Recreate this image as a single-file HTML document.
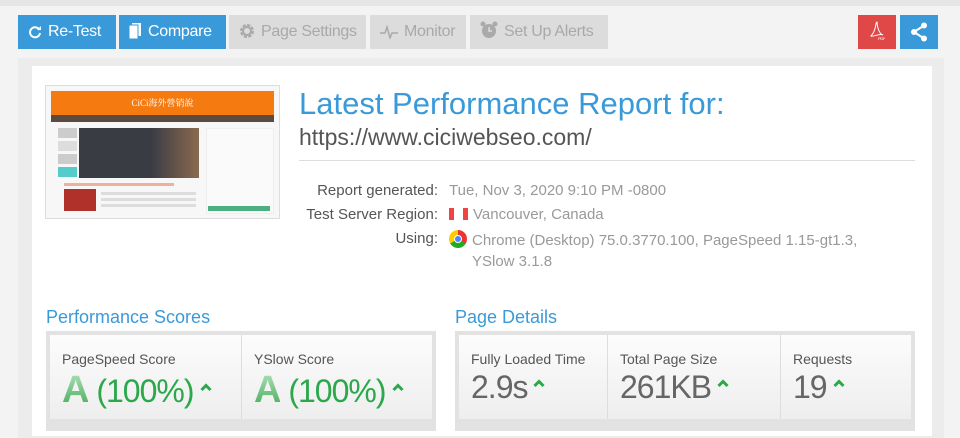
<!DOCTYPE html>
<html><head><style>
*{box-sizing:border-box;margin:0;padding:0}
body{width:960px;height:423px;overflow:hidden;background:#f3f3f3;font-family:"Liberation Sans",sans-serif;position:relative}
.top{position:absolute;left:0;top:0;width:960px;height:6px;background:#e6e6e6}
.btn{position:absolute;top:15px;height:34px;font-size:16px;line-height:34px;color:#fff;background:#3a9ad9;padding-left:10px;letter-spacing:-0.3px}
.btn.g{background:#dcdcdc;color:#a9a9a9}
.btn svg{vertical-align:-3px;margin-right:6px}
.outer{position:absolute;left:18px;top:58px;width:926px;height:380px;background:#ececec}
.panel{position:absolute;left:32px;top:66px;width:900px;height:370px;background:#fff}
.a{position:absolute;white-space:nowrap}
.thumb{left:45px;top:85px;width:235px;height:134px;border:1px solid #ddd;background:#f7f7f7;padding:5px;overflow:hidden}
.lbl{color:#555;font-size:15px;text-align:right;width:140px}
.val{color:#999;font-size:15px}
.sec{color:#3a9ad9;font-size:18px}
.box{position:absolute;background:#e2e2e2;padding:4px}
.cell{position:absolute;top:4px;height:84px;background:linear-gradient(#fcfcfc,#eeeeee);border-right:1px solid #ddd}
.cell .t{position:absolute;left:12px;top:16px;font-size:14px;color:#555}
.cell .v{position:absolute;left:12px;top:34px;font-size:32px;color:#666;white-space:nowrap;letter-spacing:-1px}
.cell .v.gr{color:#2aa84a}
.up{display:inline-block;width:12px;height:10px;vertical-align:10px;margin-left:6px}
.A{font-weight:bold;font-size:38px;background:linear-gradient(#b8e4bf,#3da852);-webkit-background-clip:text;color:transparent}
.ln{position:absolute;height:3px;background:#ddd}
</style></head><body>
<div class="top"></div>
<div class="btn" style="left:18px;width:98px"><svg width="14" height="14" viewBox="0 0 14 14"><path d="M11.5 5A5 5 0 1 0 12 8" fill="none" stroke="#fff" stroke-width="2"/><path d="M9 5h4V1z" fill="#fff"/></svg>Re-Test</div>
<div class="btn" style="left:119px;width:107px"><svg width="13" height="16" viewBox="0 0 13 16"><rect x="3" y="0" width="9" height="13" fill="#fff"/><rect x="0" y="2" width="9" height="14" fill="#fff" stroke="#3a9ad9"/></svg>Compare</div>
<div class="btn g" style="left:229px;width:137px"><svg width="16" height="16" viewBox="0 0 16 16"><circle cx="8" cy="8" r="5.5" fill="none" stroke="#aaa" stroke-width="3" stroke-dasharray="3 1.3"/><circle cx="8" cy="8" r="4" fill="none" stroke="#aaa" stroke-width="2"/></svg>Page Settings</div>
<div class="btn g" style="left:370px;width:96px"><svg width="18" height="14" viewBox="0 0 18 14"><path d="M0 8h5l2-6 3 11 2-5h6" fill="none" stroke="#aaa" stroke-width="1.5"/></svg>Monitor</div>
<div class="btn g" style="left:470px;width:138px"><svg width="18" height="18" viewBox="0 0 18 18"><circle cx="9" cy="10" r="7" fill="#aaa"/><circle cx="3" cy="3" r="2.5" fill="#aaa"/><circle cx="15" cy="3" r="2.5" fill="#aaa"/><path d="M9 6v4h3" stroke="#ddd" stroke-width="1.5" fill="none"/></svg>Set Up Alerts</div>
<div class="btn" style="left:858px;width:38px;background:#e04848;padding:0;text-align:center"><svg width="16" height="20" viewBox="0 0 16 20" style="margin:6px 0 0"><path d="M8 1c-2 0 0 8-6 14 3 1 9-3 12-1-4-1-6-9-6-13z" fill="none" stroke="#fff" stroke-width="1"/><text x="9" y="19" font-size="4" fill="#fff" font-family="Liberation Sans">PDF</text></svg></div>
<div class="btn" style="left:900px;width:38px;padding:0;text-align:center"><svg width="18" height="20" viewBox="0 0 18 20" style="margin:7px 0 0"><circle cx="14" cy="3.5" r="3" fill="#fff"/><circle cx="4" cy="10" r="3" fill="#fff"/><circle cx="14" cy="16.5" r="3" fill="#fff"/><path d="M14 3.5L4 10l10 6.5" stroke="#fff" stroke-width="2" fill="none"/></svg></div>
<div class="outer"></div>
<div class="panel"></div>
<div class="a thumb">
<div style="height:24px;background:#f57a10;color:#fff;font-size:9px;text-align:center;line-height:24px;font-family:'Liberation Serif','Noto Serif CJK SC',serif">CiCi海外營销說</div>
<div style="height:7px;background:#5a4a40"></div>
<div style="position:absolute;left:12px;top:42px;width:19px;height:10px;background:#ccc"></div>
<div style="position:absolute;left:12px;top:55px;width:19px;height:10px;background:#ddd"></div>
<div style="position:absolute;left:12px;top:68px;width:19px;height:10px;background:#ccc"></div>
<div style="position:absolute;left:12px;top:81px;width:19px;height:10px;background:#5cc"></div>
<div style="position:absolute;left:33px;top:42px;width:120px;height:50px;background:linear-gradient(90deg,#3a3c44 60%,#8a6a50)"></div>
<div style="position:absolute;left:160px;top:42px;width:68px;height:86px;background:#fafafa;border:1px solid #eee"></div>
<div class="ln" style="left:18px;top:97px;width:110px;background:#f0b0a0"></div>
<div style="position:absolute;left:18px;top:103px;width:32px;height:22px;background:#b0302a"></div>
<div class="ln" style="left:55px;top:106px;width:95px"></div>
<div class="ln" style="left:55px;top:112px;width:95px"></div>
<div class="ln" style="left:55px;top:118px;width:95px"></div>
<div style="position:absolute;left:162px;top:120px;width:62px;height:5px;background:#4caf80"></div>
</div>
<div class="a" style="left:299px;top:86px;font-size:31px;color:#3a9ad9">Latest Performance Report for:</div>
<div class="a" style="left:299px;top:124px;font-size:23px;color:#555">https://www.ciciwebseo.com/</div>
<div class="a" style="left:299px;top:160px;width:616px;height:1px;background:#ddd"></div>
<div class="a lbl" style="left:298px;top:182px">Report generated:</div>
<div class="a val" style="left:449px;top:182px">Tue, Nov 3, 2020 9:10 PM -0800</div>
<div class="a lbl" style="left:298px;top:206px">Test Server Region:</div>
<div class="a val" style="left:449px;top:206px"><span style="display:inline-block;width:19px;height:12px;background:linear-gradient(90deg,#e44 5px,#fff 5px,#fff 14px,#e44 14px);vertical-align:-1px;margin-right:5px"></span>Vancouver, Canada</div>
<div class="a lbl" style="left:298px;top:230px">Using:</div>
<div class="a val" style="left:449px;top:230px;line-height:21px"><span style="display:inline-block;width:18px;height:18px;border-radius:50%;background:conic-gradient(#e33 0 120deg,#2a2 120deg 240deg,#fc0 240deg);vertical-align:-3px;margin-right:5px;position:relative"><span style="position:absolute;left:5px;top:5px;width:8px;height:8px;border-radius:50%;background:#48f;border:1px solid #fff"></span></span>Chrome (Desktop) 75.0.3770.100, PageSpeed 1.15-gt1.3,<br><span style="margin-left:23px">YSlow 3.1.8</span></div>
<div class="a sec" style="left:46px;top:307px">Performance Scores</div>
<div class="box" style="left:46px;top:331px;width:390px;height:100px">
<div class="cell" style="left:4px;width:192px"><div class="t">PageSpeed Score</div><div class="v gr"><span class="A">A</span> (100%)<svg class="up" viewBox="0 0 12 10"><path d="M1.5 8L6 3.5 10.5 8" fill="none" stroke="#2aa84a" stroke-width="3"/></svg></div></div>
<div class="cell" style="left:196px;width:190px;border-right:none"><div class="t">YSlow Score</div><div class="v gr"><span class="A">A</span> (100%)<svg class="up" viewBox="0 0 12 10"><path d="M1.5 8L6 3.5 10.5 8" fill="none" stroke="#2aa84a" stroke-width="3"/></svg></div></div>
</div>
<div class="a sec" style="left:455px;top:307px">Page Details</div>
<div class="box" style="left:455px;top:331px;width:460px;height:100px">
<div class="cell" style="left:4px;width:149px"><div class="t">Fully Loaded Time</div><div class="v">2.9s<svg class="up" viewBox="0 0 12 10"><path d="M1.5 8L6 3.5 10.5 8" fill="none" stroke="#2aa84a" stroke-width="3"/></svg></div></div>
<div class="cell" style="left:153px;width:173px"><div class="t">Total Page Size</div><div class="v">261KB<svg class="up" viewBox="0 0 12 10"><path d="M1.5 8L6 3.5 10.5 8" fill="none" stroke="#2aa84a" stroke-width="3"/></svg></div></div>
<div class="cell" style="left:326px;width:130px;border-right:none"><div class="t">Requests</div><div class="v">19<svg class="up" viewBox="0 0 12 10"><path d="M1.5 8L6 3.5 10.5 8" fill="none" stroke="#2aa84a" stroke-width="3"/></svg></div></div>
</div>
</body></html>
